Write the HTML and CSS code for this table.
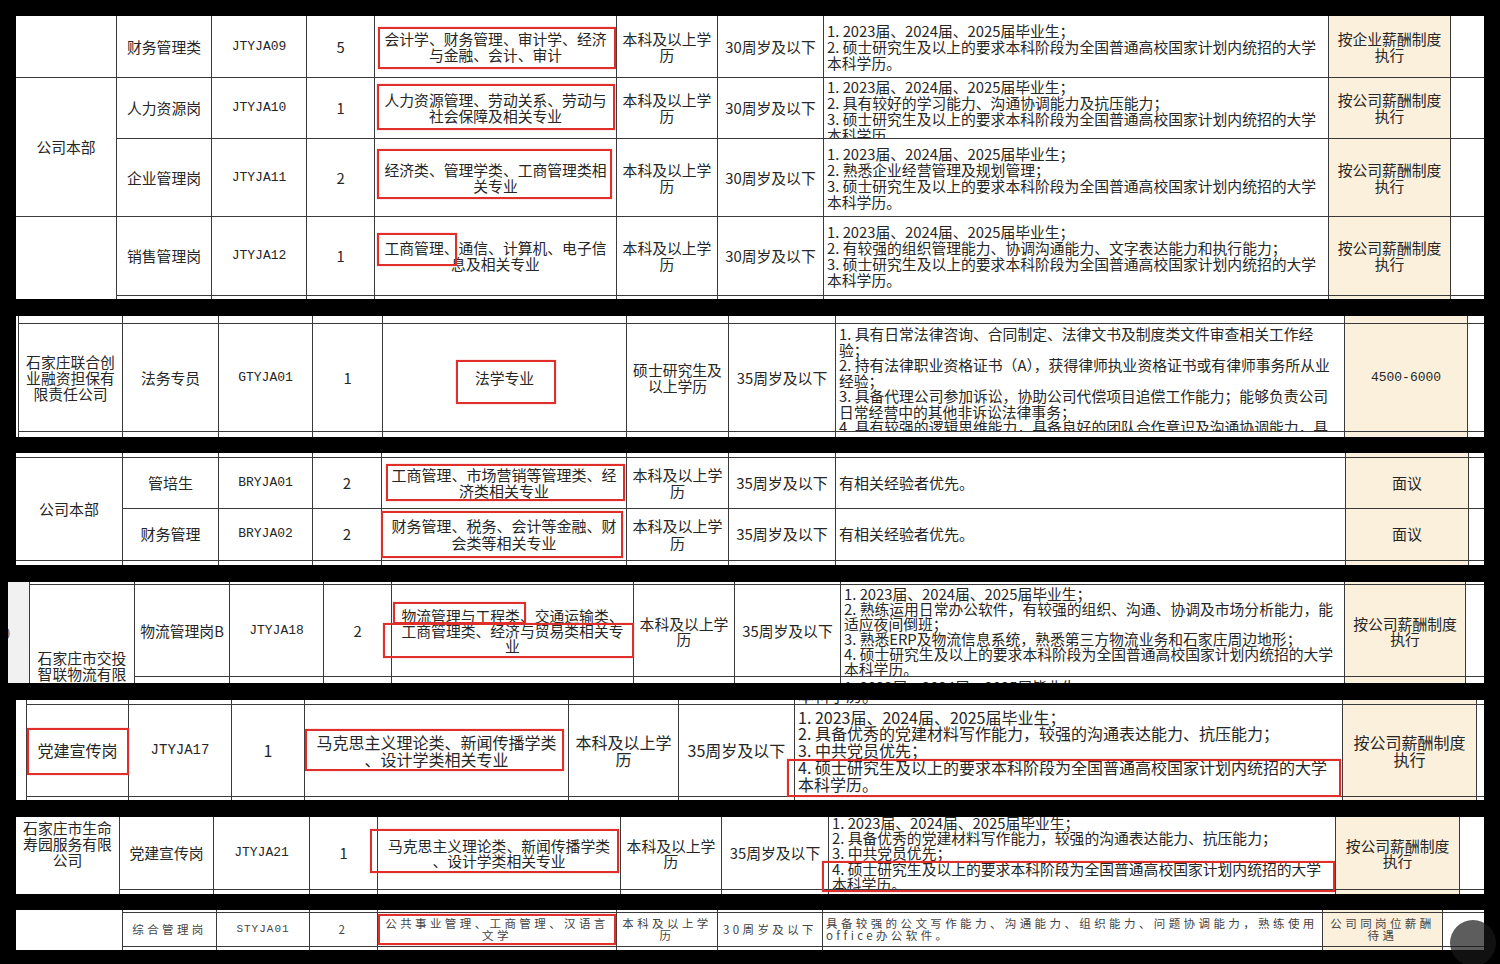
FILE: index.html
```html
<!DOCTYPE html>
<html lang="zh-CN">
<head>
<meta charset="utf-8">
<title>招聘岗位表</title>
<link rel="stylesheet" href="styles.css">
</head>
<body>
<div class="page">

  <!-- Panel 1 -->
  <div class="panel p1">
    <div class="c"></div>
    <div class="c">财务管理类</div>
    <div class="c code">JTYJA09</div>
    <div class="c">5</div>
    <div class="c">会计学、财务管理、审计学、经济<br>与金融、会计、审计</div>
    <div class="c">本科及以上学<br>历</div>
    <div class="c">30周岁及以下</div>
    <div class="c l">1. 2023届、2024届、2025届毕业生；<br>2. 硕士研究生及以上的要求本科阶段为全国普通高校国家计划内统招的大学<br>本科学历。</div>
    <div class="c bg">按企业薪酬制度<br>执行</div>
    <div class="c nr"></div>

    <div class="c s2">公司本部</div>
    <div class="c">人力资源岗</div>
    <div class="c code">JTYJA10</div>
    <div class="c">1</div>
    <div class="c">人力资源管理、劳动关系、劳动与<br>社会保障及相关专业</div>
    <div class="c">本科及以上学<br>历</div>
    <div class="c">30周岁及以下</div>
    <div class="c l t1">1. 2023届、2024届、2025届毕业生；<br>2. 具有较好的学习能力、沟通协调能力及抗压能力；<br>3. 硕士研究生及以上的要求本科阶段为全国普通高校国家计划内统招的大学<br>本科学历。</div>
    <div class="c bg">按公司薪酬制度<br>执行</div>
    <div class="c nr"></div>

    <div class="c">企业管理岗</div>
    <div class="c code">JTYJA11</div>
    <div class="c">2</div>
    <div class="c">经济类、管理学类、工商管理类相<br>关专业</div>
    <div class="c">本科及以上学<br>历</div>
    <div class="c">30周岁及以下</div>
    <div class="c l">1. 2023届、2024届、2025届毕业生；<br>2. 熟悉企业经营管理及规划管理；<br>3. 硕士研究生及以上的要求本科阶段为全国普通高校国家计划内统招的大学<br>本科学历。</div>
    <div class="c bg">按公司薪酬制度<br>执行</div>
    <div class="c nr"></div>

    <div class="c s2 nb"></div>
    <div class="c">销售管理岗</div>
    <div class="c code">JTYJA12</div>
    <div class="c">1</div>
    <div class="c">工商管理、通信、计算机、电子信<br>息及相关专业</div>
    <div class="c">本科及以上学<br>历</div>
    <div class="c">30周岁及以下</div>
    <div class="c l">1. 2023届、2024届、2025届毕业生；<br>2. 有较强的组织管理能力、协调沟通能力、文字表达能力和执行能力；<br>3. 硕士研究生及以上的要求本科阶段为全国普通高校国家计划内统招的大学<br>本科学历。</div>
    <div class="c bg">按公司薪酬制度<br>执行</div>
    <div class="c nr"></div>

    <div class="c nb"></div><div class="c nb"></div><div class="c nb"></div><div class="c nb"></div>
    <div class="c nb"></div><div class="c nb"></div><div class="c nb"></div><div class="c nb bg"></div>
    <div class="c nb nr"></div>

    <div class="rb r1a"></div>
    <div class="rb r1b"></div>
    <div class="rb r1c"></div>
    <div class="rb r1d"></div>
  </div>

  <!-- Panel 2 -->
  <div class="panel p2">
    <div class="c s3 nb"></div>
    <div class="c"></div><div class="c"></div><div class="c"></div><div class="c"></div><div class="c"></div>
    <div class="c"></div><div class="c"></div><div class="c"></div><div class="c bg"></div><div class="c nr"></div>

    <div class="c">石家庄联合创<br>业融资担保有<br>限责任公司</div>
    <div class="c">法务专员</div>
    <div class="c code">GTYJA01</div>
    <div class="c">1</div>
    <div class="c">法学专业</div>
    <div class="c">硕士研究生及<br>以上学历</div>
    <div class="c">35周岁及以下</div>
    <div class="c l t2 lh155">1. 具有日常法律咨询、合同制定、法律文书及制度类文件审查相关工作经<br>验；<br>2. 持有法律职业资格证书（A），获得律师执业资格证书或有律师事务所从业<br>经验；<br>3. 具备代理公司参加诉讼，协助公司代偿项目追偿工作能力；能够负责公司<br>日常经营中的其他非诉讼法律事务；<br>4. 具有较强的逻辑思维能力，具备良好的团队合作意识及沟通协调能力，具</div>
    <div class="c bg code">4500-6000</div>
    <div class="c nr"></div>

    <div class="c nb"></div><div class="c nb"></div><div class="c nb"></div><div class="c nb"></div><div class="c nb"></div>
    <div class="c nb"></div><div class="c nb"></div><div class="c nb"></div><div class="c nb bg"></div><div class="c nb nr"></div>

    <div class="rb r2a"></div>
  </div>

  <!-- Panel 3 -->
  <div class="panel p3">
    <div class="c"></div><div class="c"></div><div class="c"></div><div class="c"></div><div class="c"></div>
    <div class="c"></div><div class="c"></div><div class="c"></div><div class="c bg"></div><div class="c nr"></div>

    <div class="c s2">公司本部</div>
    <div class="c">管培生</div>
    <div class="c code">BRYJA01</div>
    <div class="c">2</div>
    <div class="c">工商管理、市场营销等管理类、经<br>济类相关专业</div>
    <div class="c">本科及以上学<br>历</div>
    <div class="c">35周岁及以下</div>
    <div class="c l">有相关经验者优先。</div>
    <div class="c bg">面议</div>
    <div class="c nr"></div>

    <div class="c">财务管理</div>
    <div class="c code">BRYJA02</div>
    <div class="c">2</div>
    <div class="c">财务管理、税务、会计等金融、财<br>会类等相关专业</div>
    <div class="c">本科及以上学<br>历</div>
    <div class="c">35周岁及以下</div>
    <div class="c l">有相关经验者优先。</div>
    <div class="c bg">面议</div>
    <div class="c nr"></div>

    <div class="c nb"></div><div class="c nb"></div><div class="c nb"></div><div class="c nb"></div><div class="c nb"></div>
    <div class="c nb"></div><div class="c nb"></div><div class="c nb"></div><div class="c nb bg"></div><div class="c nb nr"></div>

    <div class="rb r3a"></div>
    <div class="rb r3b"></div>
  </div>

  <!-- Panel 4 -->
  <div class="panel p4">
    <div class="c s3 nb strip"><span class="cut">0</span></div>
    <div class="c"></div><div class="c"></div><div class="c"></div><div class="c"></div><div class="c"></div>
    <div class="c"></div><div class="c"></div><div class="c"></div><div class="c bg"></div><div class="c nr"></div>

    <div class="c s2 nb t65">石家庄市交投<br>智联物流有限<br>公司</div>
    <div class="c">物流管理岗B</div>
    <div class="c code">JTYJA18</div>
    <div class="c">2</div>
    <div class="c">物流管理与工程类、交通运输类、<br>工商管理类、经济与贸易类相关专<br>业</div>
    <div class="c">本科及以上学<br>历</div>
    <div class="c">35周岁及以下</div>
    <div class="c l">1. 2023届、2024届、2025届毕业生；<br>2. 熟练运用日常办公软件，有较强的组织、沟通、协调及市场分析能力，能<br>适应夜间倒班；<br>3. 熟悉ERP及物流信息系统，熟悉第三方物流业务和石家庄周边地形；<br>4. 硕士研究生及以上的要求本科阶段为全国普通高校国家计划内统招的大学<br>本科学历。</div>
    <div class="c bg">按公司薪酬制度<br>执行</div>
    <div class="c nr"></div>

    <div class="c nb"></div><div class="c nb"></div><div class="c nb"></div><div class="c nb"></div>
    <div class="c nb"></div><div class="c nb"></div>
    <div class="c nb l t2">1. 2023届、2024届、2025届毕业生；</div>
    <div class="c nb bg"></div><div class="c nb nr"></div>

    <div class="rb r4a"></div>
    <div class="rb r4b"></div>
  </div>

  <!-- Panel 5 -->
  <div class="panel p5">
    <div class="c s3 nb"></div>
    <div class="c"></div><div class="c"></div><div class="c"></div><div class="c"></div><div class="c"></div>
    <div class="c"></div>
    <div class="c l bot">本科学历。</div>
    <div class="c bg"></div><div class="c nr"></div>

    <div class="c">党建宣传岗</div>
    <div class="c code">JTYJA17</div>
    <div class="c">1</div>
    <div class="c">马克思主义理论类、新闻传播学类<br>、设计学类相关专业</div>
    <div class="c">本科及以上学<br>历</div>
    <div class="c">35周岁及以下</div>
    <div class="c l">1. 2023届、2024届、2025届毕业生；<br>2. 具备优秀的党建材料写作能力，较强的沟通表达能力、抗压能力；<br>3. 中共党员优先；<br>4. 硕士研究生及以上的要求本科阶段为全国普通高校国家计划内统招的大学<br>本科学历。</div>
    <div class="c bg">按公司薪酬制度<br>执行</div>
    <div class="c nr"></div>

    <div class="c nb"></div><div class="c nb"></div><div class="c nb"></div><div class="c nb"></div><div class="c nb"></div>
    <div class="c nb"></div><div class="c nb"></div><div class="c nb bg"></div><div class="c nb nr"></div>

    <div class="rb r5a"></div>
    <div class="rb r5b"></div>
    <div class="rb r5c"></div>
  </div>

  <!-- Panel 6 -->
  <div class="panel p6">
    <div class="c s2 nb t3">石家庄市生命<br>寿园服务有限<br>公司</div>
    <div class="c">党建宣传岗</div>
    <div class="c code">JTYJA21</div>
    <div class="c">1</div>
    <div class="c">马克思主义理论类、新闻传播学类<br>、设计学类相关专业</div>
    <div class="c">本科及以上学<br>历</div>
    <div class="c">35周岁及以下</div>
    <div class="c l">1. 2023届、2024届、2025届毕业生；<br>2. 具备优秀的党建材料写作能力，较强的沟通表达能力、抗压能力；<br>3. 中共党员优先；<br>4. 硕士研究生及以上的要求本科阶段为全国普通高校国家计划内统招的大学<br>本科学历。</div>
    <div class="c bg">按公司薪酬制度<br>执行</div>
    <div class="c nr"></div>

    <div class="c nb"></div><div class="c nb"></div><div class="c nb"></div><div class="c nb"></div>
    <div class="c nb"></div><div class="c nb"></div><div class="c nb"></div><div class="c nb bg"></div><div class="c nb nr"></div>

    <div class="rb r6a"></div>
    <div class="rb r6b"></div>
  </div>

  <!-- Panel 7 -->
  <div class="panel p7">
    <div class="c s3 nb"></div>
    <div class="c"></div><div class="c"></div><div class="c"></div><div class="c"></div>
    <div class="c"></div><div class="c"></div><div class="c"></div><div class="c bg"></div><div class="c nr"></div>

    <div class="c">综合管理岗</div>
    <div class="c code">STYJA01</div>
    <div class="c">2</div>
    <div class="c">公共事业管理、工商管理、汉语言<br>文学</div>
    <div class="c">本科及以上学<br>历</div>
    <div class="c">30周岁及以下</div>
    <div class="c l">具备较强的公文写作能力、沟通能力、组织能力、问题协调能力，熟练使用<br>office办公软件。</div>
    <div class="c bg">公司同岗位薪酬<br>待遇</div>
    <div class="c nr"></div>

    <div class="c nb"></div><div class="c nb"></div><div class="c nb"></div><div class="c nb"></div>
    <div class="c nb"></div><div class="c nb"></div><div class="c nb"></div><div class="c nb bg"></div><div class="c nb nr"></div>

    <div class="rb r7a"></div>
  </div>

  <div class="fab"></div>
</div>
</body>
</html>
```

FILE: styles.css
```css
html, body {
  margin: 0;
  padding: 0;
  background: #000;
}

.page {
  position: relative;
  width: 1500px;
  height: 964px;
  box-sizing: border-box;
  padding: 16px 16px 0 16px;
  display: flex;
  flex-direction: column;
  align-items: flex-start;
  overflow: hidden;
  font-family: "Noto Sans CJK SC", "Noto Sans", sans-serif;
  color: #262626;
}

.panel {
  position: relative;
  display: grid;
  background: #fff;
  flex: none;
}

.c {
  box-sizing: border-box;
  border-right: 1px solid #3a3a3a;
  border-bottom: 1px solid #3a3a3a;
  display: flex;
  align-items: center;
  justify-content: center;
  text-align: center;
  white-space: nowrap;
  overflow: hidden;
  min-width: 0;
  min-height: 0;
}

.nb { border-bottom: none; }
.nr { border-right: none; }
.s2 { grid-row: span 2; }
.s3 { grid-row: span 3; }

.l {
  justify-content: flex-start;
  text-align: left;
  padding-left: 3px;
}

.t1 { align-items: flex-start; padding-top: 1px; }
.t2 { align-items: flex-start; padding-top: 2px; }
.t3 { align-items: flex-start; padding-top: 3px; line-height: 16px; }
.t65 { align-items: flex-start; padding-top: 65px; line-height: 16px; }
.bot { align-items: flex-end; }
.lh155 { line-height: 15.5px; }

.bg { background: #fbf0dc; }

.code {
  font-family: "Liberation Mono", monospace;
  font-size: 13px;
}

.strip {
  background: #f1f1f1;
  justify-content: flex-start;
}
.cut {
  margin-left: -6px;
  color: #666;
}

/* Panel geometry */
.p1 {
  grid-template-columns: 101px 95px 95px 68px 242px 101px 106px 505px 122px 33px;
  grid-template-rows: 62px 61px 78px 79px 3px;
  font-size: 14.8px;
  line-height: 16px;
}

.p2 {
  margin-top: 17px;
  grid-template-columns: 3px 104px 96px 94px 70px 244px 102px 107px 509px 123px 16px;
  grid-template-rows: 8px 108px 5px;
  font-size: 14.8px;
  line-height: 16px;
}

.p3 {
  margin-top: 16px;
  grid-template-columns: 107px 96px 94px 69px 245px 102px 107px 510px 123px 15px;
  grid-template-rows: 5px 51px 52px 4px;
  font-size: 15px;
  line-height: 16.5px;
}

.p4 {
  margin-top: 17px;
  margin-left: -8px;
  grid-template-columns: 22px 105px 95px 94px 68px 242px 101px 106px 504px 121px 18px;
  grid-template-rows: 3px 92px 6px;
  font-size: 14.8px;
  line-height: 15px;
}

.p5 {
  margin-top: 17px;
  grid-template-columns: 11px 102px 103px 73px 264px 110px 116px 548px 134px 7px;
  grid-template-rows: 5px 92px 3px;
  font-size: 16px;
  line-height: 16.7px;
}
.p5 .code { font-size: 14px; }

.p6 {
  margin-top: 17px;
  grid-template-columns: 104px 94px 96px 68px 243px 101px 107px 507px 124px 24px;
  grid-template-rows: 73px 4px;
  font-size: 14.8px;
  line-height: 15.3px;
}

.p7 {
  margin-top: 16px;
  grid-template-columns: 107px 94px 93px 68px 239px 101px 105px 500px 120px 41px;
  grid-template-rows: 3px 34px 3px;
  font-size: 11.5px;
  line-height: 11.5px;
  letter-spacing: 3.4px;
  color: #444;
}
.p7 .code {
  font-size: 11px;
  letter-spacing: 1px;
}

/* Red highlight boxes */
.rb {
  position: absolute;
  box-sizing: border-box;
  border: 2px solid #e02f2b;
  box-shadow: 0 0 1px rgba(224, 47, 43, 0.6);
}
.r1a { left: 362px; top: 11px; width: 238px; height: 42px; }
.r1b { left: 361px; top: 68px; width: 238px; height: 46px; }
.r1c { left: 361px; top: 133px; width: 235px; height: 50px; }
.r1d { left: 361px; top: 217px; width: 80px; height: 33px; }

.r2a { left: 440px; top: 44px; width: 100px; height: 44px; }

.r3a { left: 370px; top: 11px; width: 239px; height: 37px; }
.r3b { left: 365px; top: 58px; width: 242px; height: 47px; }

.r4a { left: 385px; top: 20px; width: 133px; height: 22px; }
.r4b { left: 375px; top: 41px; width: 251px; height: 35px; }

.r5a { left: 11px; top: 28px; width: 102px; height: 47px; }
.r5b { left: 289px; top: 29px; width: 259px; height: 42px; }
.r5c { left: 771px; top: 59px; width: 554px; height: 38px; }

.r6a { left: 354px; top: 12px; width: 249px; height: 44px; }
.r6b { left: 806px; top: 44px; width: 513px; height: 31px; }

.r7a { left: 362px; top: 4px; width: 238px; height: 31px; }

/* faint translucent floating button in the corner */
.fab {
  position: absolute;
  left: 1450px;
  top: 920px;
  width: 46px;
  height: 46px;
  border-radius: 50%;
  background: rgba(24, 24, 24, 0.7);
}
```
